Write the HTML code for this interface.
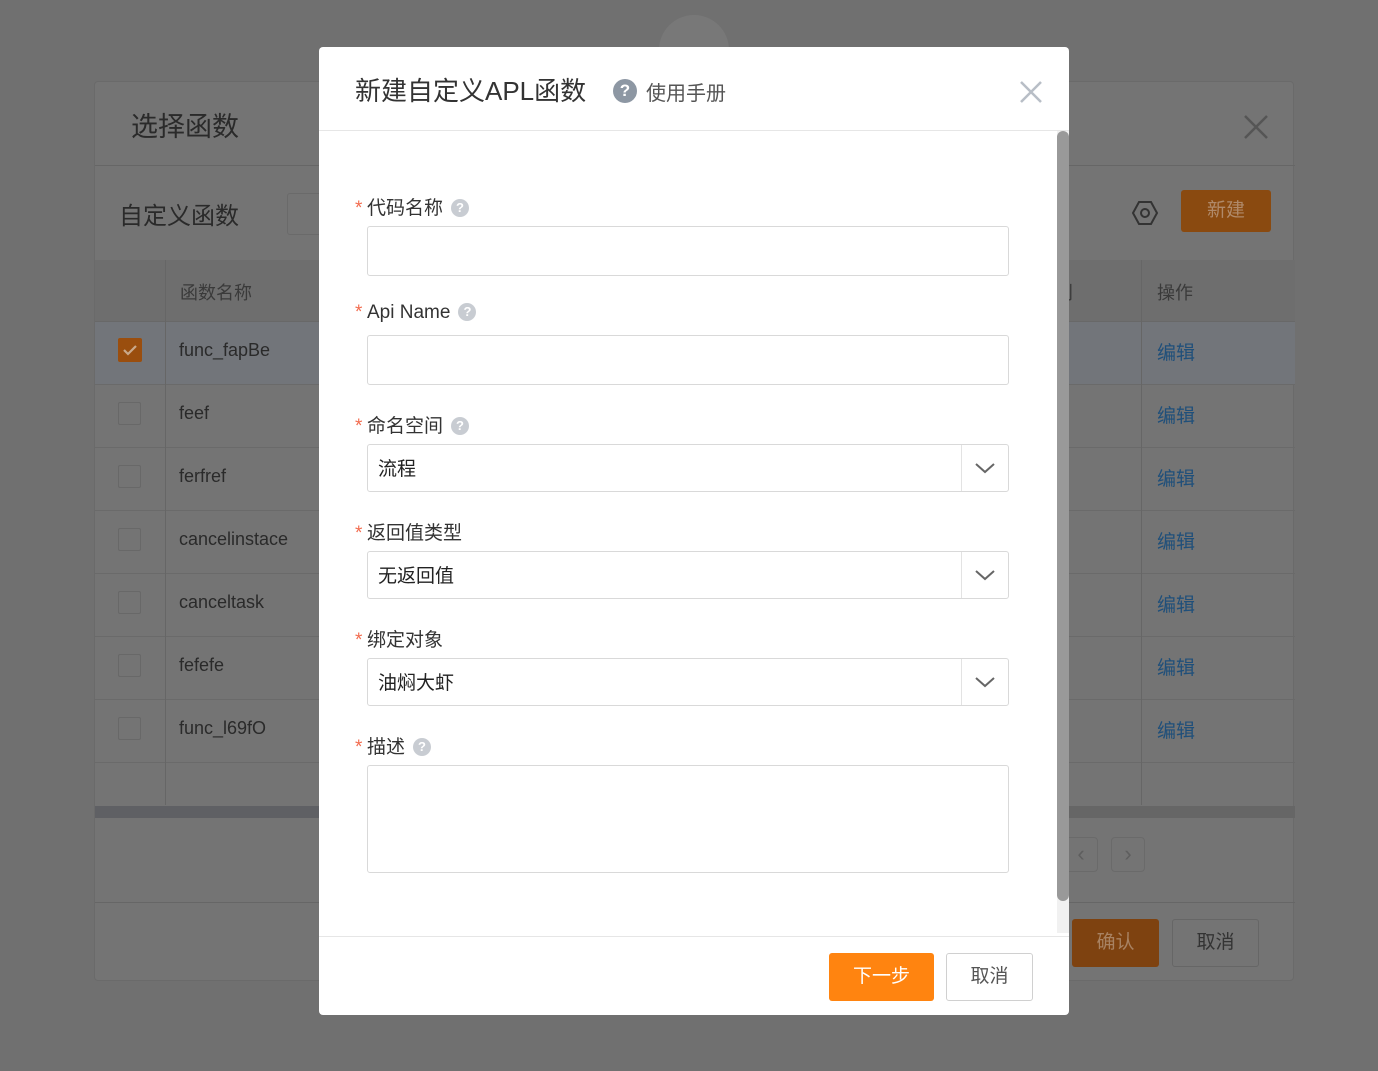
<!DOCTYPE html>
<html><head><meta charset="utf-8"><style>
*{box-sizing:border-box;margin:0;padding:0}
body{width:1378px;height:1071px;background:#707070;position:relative;overflow:hidden;font-family:"Liberation Sans","Noto Sans CJK SC",sans-serif;color:#222}
.a{position:absolute}
.panel{left:94px;top:81px;width:1200px;height:900px;background:#747474;border-radius:4px;border:1px solid #6a6a6a}
.hl{background:#666;height:1px}
.vl{background:#666;width:1px}
.cb{width:23px;height:23px;border:1px solid #686868;border-radius:2px}
.row{left:0;width:1200px;height:63px;border-bottom:1px solid #6a6a6a}
.rt{font-size:18px;color:#2a2a2a}
.ed{font-size:19px;color:#1f4f7a}
.modal{left:319px;top:47px;width:750px;height:968px;background:#fff;border-radius:4px;overflow:hidden}
.lbl{font-size:19px;color:#333}
.lbl .s{color:#f26c4f;font-size:19px;display:inline-block;width:12px}
.q{display:inline-block;width:18px;height:18px;border-radius:50%;background:#c8ccd2;color:#fff;font-size:13px;font-weight:bold;text-align:center;line-height:18px;vertical-align:2px;margin-left:8px}
.in{left:48px;width:642px;height:50px;border:1px solid #d9d9d9;border-radius:3px}
.sel{left:48px;width:642px;height:48px;border:1px solid #d9d9d9;border-radius:3px;font-size:19px;color:#222;padding:9px 0 0 10px}
.sel .dd{position:absolute;right:0;top:0;width:47px;height:46px;border-left:1px solid #e3e3e3}
</style></head><body>
<div class="a" style="left:659px;top:15px;width:70px;height:70px;border-radius:50%;background:#787878"></div>
<div class="a panel">
  <div class="a" style="left:36px;top:23px;font-size:27px;color:#2a2a2a">选择函数</div>
  <svg class="a" style="left:1148px;top:32px" width="26" height="26"><path d="M2 2L24 24M24 2L2 24" stroke="#555" stroke-width="2.5"/></svg>
  <div class="a hl" style="left:0;top:83px;width:1200px"></div>
  <div class="a" style="left:24px;top:114px;font-size:24px;color:#2a2a2a">自定义函数</div>
  <div class="a" style="left:192px;top:111px;width:40px;height:42px;border:1px solid #6a6a6a;border-radius:3px"></div>
  <svg class="a" style="left:1036px;top:117px" width="28" height="28"><path d="M8 3h12l6 11-6 11H8L2 14z" fill="none" stroke="#333" stroke-width="2"/><circle cx="14" cy="14" r="4" fill="none" stroke="#333" stroke-width="2"/></svg>
  <div class="a" style="left:1086px;top:108px;width:90px;height:42px;background:#8a4a10;border-radius:3px;color:#b08a6a;font-size:19px;text-align:center;line-height:42px">新建</div>
  <div class="a" style="left:0;top:178px;width:1200px;height:62px;background:#6e6e6e;border-bottom:1px solid #686868"></div>
  <div class="a" style="left:85px;top:197px;font-size:18px;color:#3a3a3a">函数名称</div>
  <div class="a" style="left:960px;top:197px;font-size:18px;color:#3a3a3a">别</div>
  <div class="a" style="left:1062px;top:197px;font-size:18px;color:#3a3a3a">操作</div>
  <div class="a row" style="top:240px;background:#72757a"></div>
  <div class="a" style="left:23px;top:256px;width:24px;height:24px;background:#9a4e0e;border-radius:2px"><svg width="24" height="24"><path d="M6 12l4 4 8-8" stroke="#c9a98b" stroke-width="2.2" fill="none"/></svg></div>
  <div class="a rt" style="left:84px;top:258px">func_fapBe</div>
  <div class="a ed" style="left:1062px;top:256px">编辑</div>

  <div class="a row" style="top:303px"></div>
  <div class="a cb" style="left:23px;top:320px"></div><div class="a rt" style="left:84px;top:321px">feef</div><div class="a ed" style="left:1062px;top:319px">编辑</div>
  <div class="a row" style="top:366px"></div>
  <div class="a cb" style="left:23px;top:383px"></div><div class="a rt" style="left:84px;top:384px">ferfref</div><div class="a ed" style="left:1062px;top:382px">编辑</div>
  <div class="a row" style="top:429px"></div>
  <div class="a cb" style="left:23px;top:446px"></div><div class="a rt" style="left:84px;top:447px">cancelinstace</div><div class="a ed" style="left:1062px;top:445px">编辑</div>
  <div class="a row" style="top:492px"></div>
  <div class="a cb" style="left:23px;top:509px"></div><div class="a rt" style="left:84px;top:510px">canceltask</div><div class="a ed" style="left:1062px;top:508px">编辑</div>
  <div class="a row" style="top:555px"></div>
  <div class="a cb" style="left:23px;top:572px"></div><div class="a rt" style="left:84px;top:573px">fefefe</div><div class="a ed" style="left:1062px;top:571px">编辑</div>
  <div class="a row" style="top:618px"></div>
  <div class="a cb" style="left:23px;top:635px"></div><div class="a rt" style="left:84px;top:636px">func_l69fO</div><div class="a ed" style="left:1062px;top:634px">编辑</div>
  <div class="a vl" style="left:70px;top:178px;height:545px"></div>
  <div class="a vl" style="left:1046px;top:178px;height:545px"></div>
  <div class="a" style="left:0;top:724px;width:1200px;height:12px;background:#666;"></div>
  <div class="a" style="left:0;top:724px;width:230px;height:12px;background:#5f6064;"></div>
  <div class="a" style="left:969px;top:755px;width:34px;height:35px;border:1px solid #6a6a6a;border-radius:4px;color:#5e5e5e;font-size:22px;text-align:center;line-height:32px">‹</div>
  <div class="a" style="left:1016px;top:755px;width:34px;height:35px;border:1px solid #6a6a6a;border-radius:4px;color:#5e5e5e;font-size:22px;text-align:center;line-height:32px">›</div>
  <div class="a hl" style="left:0;top:820px;width:1200px"></div>
  <div class="a" style="left:977px;top:837px;width:87px;height:48px;background:#7e4210;border-radius:3px;color:#a88262;font-size:19px;text-align:center;line-height:48px">确认</div>
  <div class="a" style="left:1077px;top:837px;width:87px;height:48px;border:1px solid #666;border-radius:3px;color:#333;font-size:19px;text-align:center;line-height:46px">取消</div>
</div>

<div class="a modal">
  <div class="a" style="left:36px;top:24px;font-size:26px;color:#333">新建自定义APL函数</div>
  <div class="a" style="left:294px;top:32px;width:24px;height:24px;border-radius:50%;background:#8d97a3;color:#fff;font-weight:bold;font-size:17px;text-align:center;line-height:24px">?</div>
  <div class="a" style="left:327px;top:30px;font-size:20px;color:#555">使用手册</div>
  <svg class="a" style="left:700px;top:33px" width="24" height="24"><path d="M2 2L22 22M22 2L2 22" stroke="#b8bec6" stroke-width="2.5"/></svg>
  <div class="a" style="left:0;top:83px;width:750px;height:1px;background:#e6e6e6"></div>
  <div class="a" style="left:738px;top:84px;width:12px;height:802px;background:#f1f1f1"></div>
  <div class="a" style="left:738px;top:84px;width:12px;height:770px;background:#999;border-radius:6px"></div>

  <div class="a lbl" style="left:36px;top:146px"><span class="s">*</span>代码名称<span class="q">?</span></div>
  <div class="a in" style="top:179px"></div>
  <div class="a lbl" style="left:36px;top:255px"><span class="s">*</span>Api Name<span class="q">?</span></div>
  <div class="a in" style="top:288px"></div>
  <div class="a lbl" style="left:36px;top:364px"><span class="s">*</span>命名空间<span class="q">?</span></div>
  <div class="a sel" style="top:397px">流程<div class="dd"><svg width="47" height="46"><path d="M14 19l9 8 9-8" stroke="#666" stroke-width="2" fill="none"/></svg></div></div>
  <div class="a lbl" style="left:36px;top:471px"><span class="s">*</span>返回值类型</div>
  <div class="a sel" style="top:504px">无返回值<div class="dd"><svg width="47" height="46"><path d="M14 19l9 8 9-8" stroke="#666" stroke-width="2" fill="none"/></svg></div></div>
  <div class="a lbl" style="left:36px;top:578px"><span class="s">*</span>绑定对象</div>
  <div class="a sel" style="top:611px">油焖大虾<div class="dd"><svg width="47" height="46"><path d="M14 19l9 8 9-8" stroke="#666" stroke-width="2" fill="none"/></svg></div></div>
  <div class="a lbl" style="left:36px;top:685px"><span class="s">*</span>描述<span class="q">?</span></div>
  <div class="a in" style="top:718px;height:108px"></div>

  <div class="a" style="left:0;top:889px;width:750px;height:1px;background:#e6e6e6"></div>
  <div class="a" style="left:510px;top:906px;width:105px;height:48px;background:#ff8410;border-radius:3px;color:#fff;font-size:19px;text-align:center;line-height:48px">下一步</div>
  <div class="a" style="left:627px;top:906px;width:87px;height:48px;border:1px solid #d0d0d0;border-radius:3px;color:#555;font-size:19px;text-align:center;line-height:46px">取消</div>
</div>
</body></html>
